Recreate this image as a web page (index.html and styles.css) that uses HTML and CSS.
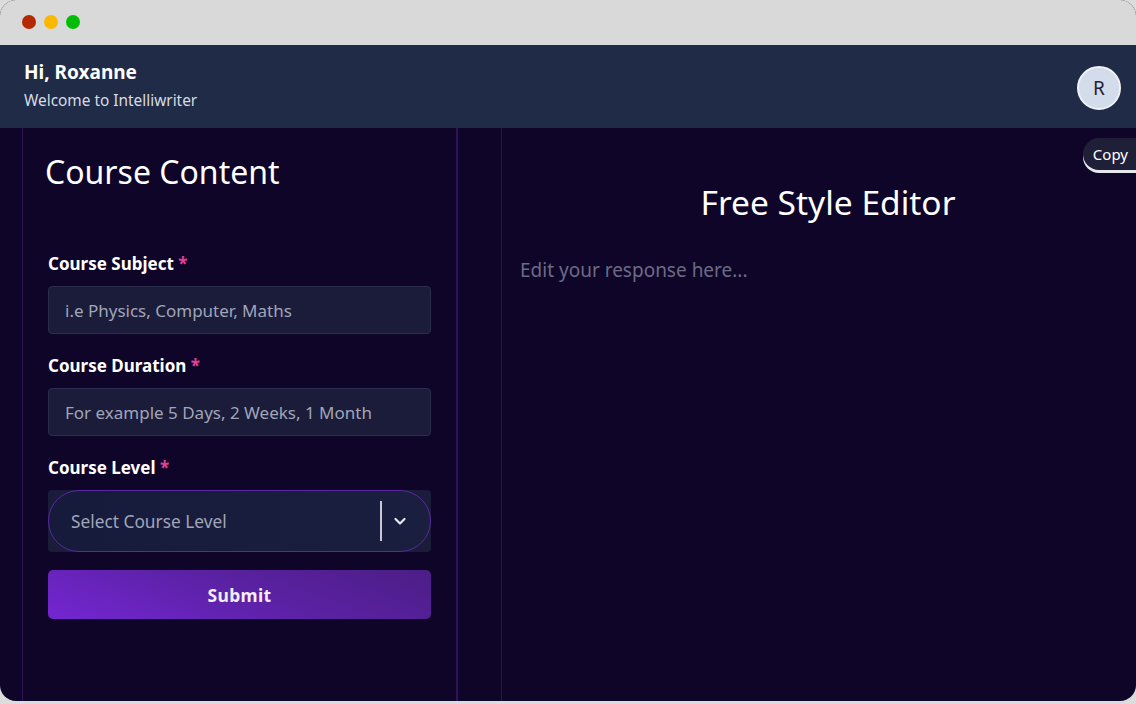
FILE: index.html
```html
<!DOCTYPE html>
<html>
<head>
<meta charset="utf-8">
<link rel="stylesheet" href="styles.css">
</head>
<body>
<div class="window">
  <div class="titlebar">
    <span class="dot red"></span><span class="dot yellow"></span><span class="dot green"></span>
  </div>
  <header class="header">
    <div class="greet">
      <div class="hi">Hi, Roxanne</div>
      <div class="welcome">Welcome to Intelliwriter</div>
    </div>
    <div class="avatar">R</div>
  </header>
  <main class="main">
    <section class="panel">
      <h1 class="panel-title">Course Content</h1>
      <form class="form">
        <label class="label">Course Subject <span class="req">*</span></label>
        <div class="input">i.e Physics, Computer, Maths</div>
        <label class="label">Course Duration <span class="req">*</span></label>
        <div class="input">For example 5 Days, 2 Weeks, 1 Month</div>
        <label class="label">Course Level <span class="req">*</span></label>
        <div class="select-wrap">
          <div class="select">
            <span class="select-text">Select Course Level</span>
            <span class="sep"></span>
            <svg class="chev" width="16" height="16" viewBox="0 0 16 16"><path d="M3.5 6l4.5 4.5 4.5-4.5" fill="none" stroke="#e6e6ee" stroke-width="2.2" stroke-linecap="round" stroke-linejoin="round"/></svg>
          </div>
        </div>
        <div class="submit">Submit</div>
      </form>
    </section>
    <div class="gutter"></div>
    <section class="editor">
      <h2 class="editor-title">Free Style Editor</h2>
      <div class="placeholder">Edit your response here...</div>
      <div class="copy">Copy</div>
    </section>
  </main>
</div>
</body>
</html>
```
FILE: styles.css
```css
html, body {
  margin: 0;
  padding: 0;
  background: #dcdcdc;
}
body {
  width: 1136px;
  height: 704px;
  overflow: hidden;
  font-family: "Noto Sans", "Open Sans", sans-serif;
}
.window {
  width: 1136px;
  height: 701px;
  display: flex;
  flex-direction: column;
  border-radius: 16px;
  overflow: hidden;
  background: #0e0529;
}
.titlebar {
  height: 45px;
  background: #d9d9d9;
  display: flex;
  align-items: center;
  gap: 8px;
  padding-left: 22px;
  box-sizing: border-box;
  padding-bottom: 1px;
}
.dot {
  width: 14px;
  height: 14px;
  border-radius: 50%;
  display: inline-block;
}
.red { background: #b32a00; }
.yellow { background: #fbb800; }
.green { background: #05bd05; }
.header {
  height: 83px;
  background: #1f2b47;
  display: flex;
  align-items: center;
  justify-content: space-between;
  padding: 0 15px 0 24px;
  box-sizing: border-box;
}
.greet { margin-top: -2px; }
.hi {
  color: #ffffff;
  font-size: 19px;
  font-weight: 700;
  line-height: 24px;
}
.welcome {
  color: #d7dbe3;
  font-size: 15.4px;
  line-height: 20px;
  margin-top: 7px;
}
.avatar {
  width: 40px;
  height: 40px;
  border-radius: 50%;
  background: #d3dceb;
  border: 2px solid #eef1f6;
  color: #1f2333;
  font-size: 19px;
  display: flex;
  align-items: center;
  justify-content: center;
  margin-top: 2px;
}
.main {
  flex: 1;
  display: flex;
  position: relative;
}
.panel {
  margin-left: 22px;
  width: 433px;
  border-left: 1px solid #2e1456;
  border-right: 2px solid #2e1456;
  box-sizing: content-box;
}
.panel-title {
  margin: 24px 0 0 22px;
  color: #ffffff;
  font-size: 32px;
  font-weight: 400;
  line-height: 40px;
}
.form {
  display: flex;
  flex-direction: column;
  padding: 0 25px 0 25px;
  margin-top: 60px;
}
.label {
  color: #ffffff;
  font-size: 17px;
  font-weight: 700;
  line-height: 24px;
  margin-bottom: 10px;
}
.req { color: #e0409a; }
.input {
  height: 48px;
  box-sizing: border-box;
  background: #1a1c3a;
  border: 1px solid #2a2d4c;
  border-radius: 4px;
  color: #a1a5b8;
  font-size: 17px;
  padding: 0 16px;
  display: flex;
  align-items: center;
  margin-bottom: 20px;
}
.select-wrap {
  background: #1a1c3a;
  border-radius: 4px;
  height: 62px;
}
.select {
  height: 62px;
  box-sizing: border-box;
  border: 1.5px solid #5b27a5;
  border-radius: 31px;
  display: flex;
  align-items: center;
  padding: 0 22px;
  background: linear-gradient(90deg, #161a3b, #1b1f3f);
}
.select-text {
  flex: 1;
  color: #a1a5b8;
  font-size: 17.3px;
}
.sep {
  width: 2px;
  height: 40px;
  background: #c9c9d4;
  margin-right: 10px;
}
.chev { margin-right: 0; }
.submit {
  margin-top: 18px;
  height: 49px;
  border-radius: 5px;
  background: linear-gradient(20deg, #7426d2 0%, #5a21a2 55%, #4c1e86 100%);
  color: #f2eefa;
  font-size: 17.5px;
  font-weight: 700;
  display: flex;
  align-items: center;
  justify-content: center;
  letter-spacing: 0.3px;
}
.gutter {
  width: 43px;
  border-right: 1px solid #2e1456;
}
.editor {
  flex: 1;
  position: relative;
  padding-left: 18px;
}
.editor-title {
  margin: 54px 0 0 0;
  text-align: center;
  color: #ffffff;
  font-size: 33.5px;
  font-weight: 400;
  line-height: 40px;
}
.placeholder {
  margin-top: 35px;
  color: #6d6b84;
  font-size: 19px;
  line-height: 26px;
}
.copy {
  position: absolute;
  top: 10px;
  right: 0;
  height: 32px;
  padding: 0 8px 0 10px;
  border-radius: 16px 0 0 16px;
  background: #1f2038;
  color: #ffffff;
  font-size: 15px;
  display: flex;
  align-items: center;
  box-shadow: 0 3px 0 #e6e6ee;
}
```
